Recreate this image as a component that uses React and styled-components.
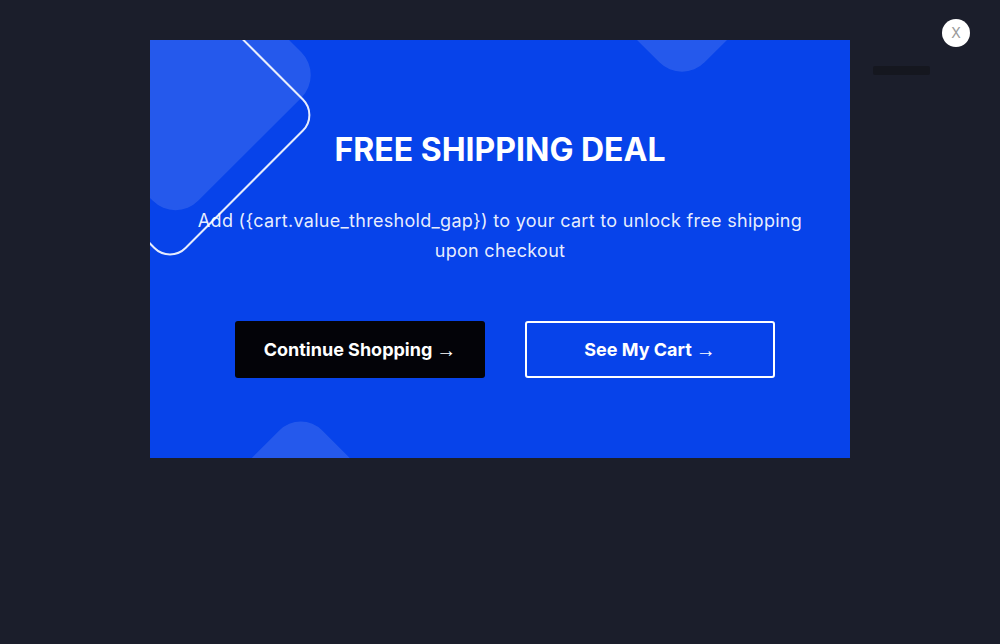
import React from "react";
import styled, { createGlobalStyle } from "styled-components";

const Global = createGlobalStyle`
  html, body { margin: 0; padding: 0; background: #1b1e2b; }
  body { font-family: Inter, "Noto Sans", Arial, sans-serif; }
  * { box-sizing: border-box; }
`;

const Page = styled.div`
  width: 1000px;
  height: 644px;
  background: #1b1e2b;
  display: flex;
  flex-direction: column;
  align-items: center;
  padding-top: 40px;
  position: relative;
  overflow: hidden;
`;

const BackdropBar = styled.div`
  position: absolute;
  top: 66px;
  left: 873px;
  width: 57px;
  height: 9px;
  border-radius: 2px;
  background: #14151d;
  opacity: 0.8;
`;

const CloseButton = styled.button`
  position: absolute;
  top: 19px;
  left: 942px;
  width: 28px;
  height: 28px;
  border-radius: 50%;
  border: none;
  background: #ffffff;
  color: #9a9a9a;
  font-family: Inter, Arial, sans-serif;
  font-size: 14px;
  line-height: 28px;
  padding: 0;
  display: flex;
  align-items: center;
  justify-content: center;
`;

const Modal = styled.div`
  position: relative;
  width: 700px;
  height: 418px;
  background: #0743ea;
  overflow: hidden;
  display: flex;
  flex-direction: column;
  align-items: center;
  padding-top: 91px;
`;

const Decor = styled.svg`
  position: absolute;
  inset: 0;
  pointer-events: none;
`;

const Title = styled.h1`
  position: relative;
  margin: 0;
  font-size: 32px;
  line-height: 38px;
  font-weight: 700;
  color: #ffffff;
  letter-spacing: 0;
`;

const Text = styled.p`
  position: relative;
  margin: 37px 0 0;
  width: 640px;
  text-align: center;
  font-size: 18px;
  line-height: 30px;
  font-weight: 400;
  letter-spacing: 0.3px;
  color: rgba(255, 255, 255, 0.92);
`;

const Actions = styled.div`
  position: relative;
  display: flex;
  gap: 40px;
  margin-top: 55px;
  padding-left: 10px;
`;

const Button = styled.button`
  width: 250px;
  height: 57px;
  border-radius: 3px;
  font-family: Inter, Arial, sans-serif;
  font-size: 18px;
  font-weight: 700;
  color: #ffffff;
  background: ${(p) => (p.$outline ? "transparent" : "#030308")};
  border: ${(p) => (p.$outline ? "2px solid #ffffff" : "none")};
  display: flex;
  align-items: center;
  justify-content: center;
  gap: 4px;
  padding: 0;
`;

const Arrow = styled.span`
  font-family: "Liberation Sans", Arial, sans-serif;
  font-weight: 400;
  font-size: 20px;
  line-height: 1;
`;

const message =
  "Add ({cart.value_threshold_gap}) to your cart to unlock free shipping upon checkout";

function Diamond({ cx, cy, r, outline }) {
  const s = 210;
  return (
    <rect
      x={cx - s / 2}
      y={cy - s / 2}
      width={s}
      height={s}
      rx={r}
      transform={`rotate(45 ${cx} ${cy})`}
      fill={outline ? "none" : "rgba(255,255,255,0.12)"}
      stroke={outline ? "rgba(255,255,255,0.9)" : "none"}
      strokeWidth={outline ? 2 : 0}
    />
  );
}

export default function App() {
  return (
    <>
      <Global />
      <Page>
        <BackdropBar />
        <Modal>
          <Decor width="700" height="418" viewBox="0 0 700 418">
            <Diamond cx={25.5} cy={35} r={32} />
            <Diamond cx={532} cy={-103.5} r={32} />
            <Diamond cx={150.8} cy={517.5} r={30} />
            <Diamond cx={20} cy={75} r={22} outline />
          </Decor>
          <Title>FREE SHIPPING DEAL</Title>
          <Text>{message}</Text>
          <Actions>
            <Button>
              Continue Shopping<Arrow>→</Arrow>
            </Button>
            <Button $outline>
              See My Cart<Arrow>→</Arrow>
            </Button>
          </Actions>
        </Modal>
        <CloseButton>X</CloseButton>
      </Page>
    </>
  );
}
